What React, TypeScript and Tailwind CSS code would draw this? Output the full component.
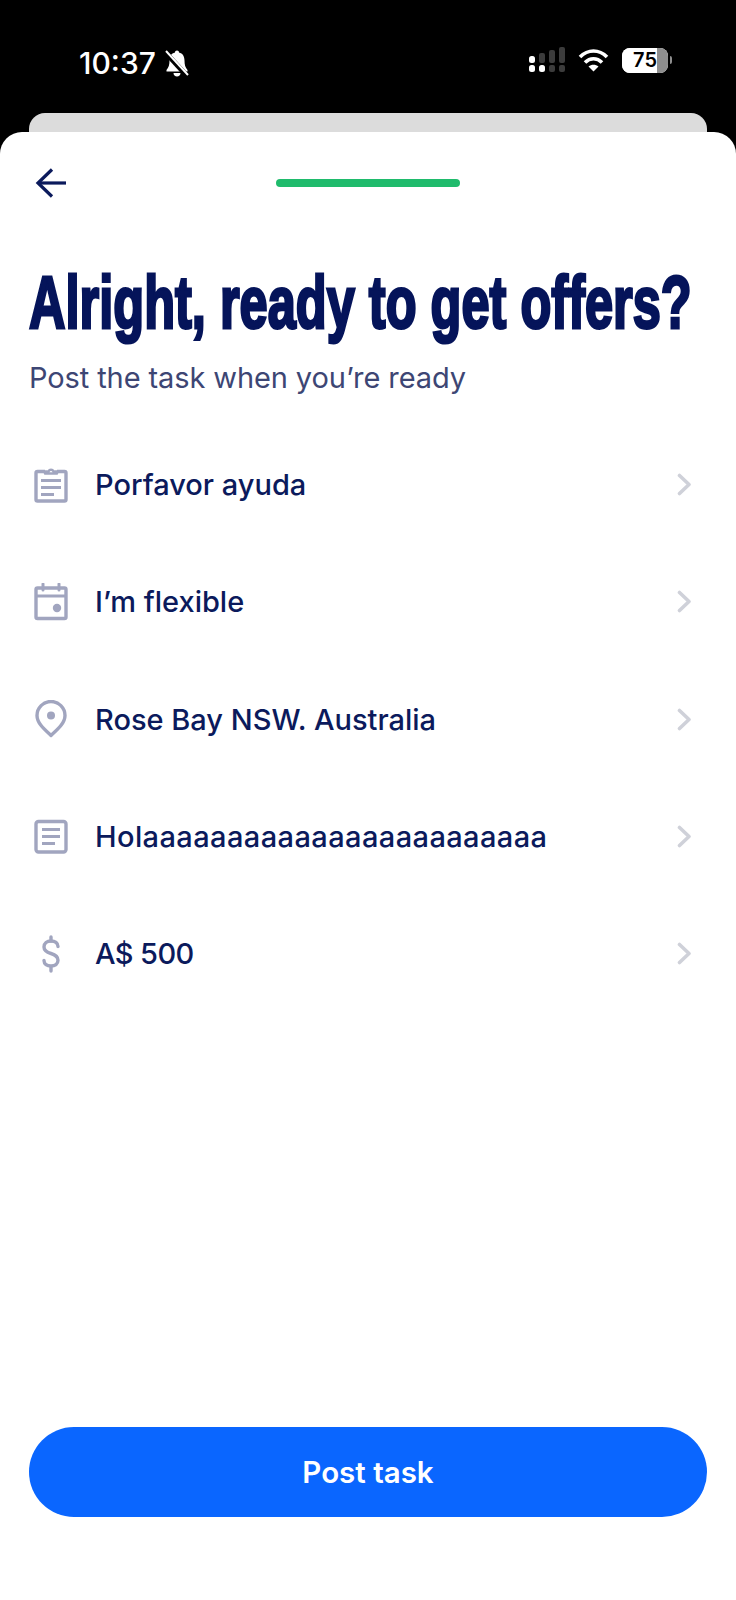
import type { ReactNode } from 'react';

const ICON_COLOR = '#a1a5bf';

function ClipboardIcon() {
  return (
    <svg width="36" height="38" viewBox="0 0 36 38" fill="none" stroke={ICON_COLOR} strokeWidth="3.4" strokeLinejoin="round">
      <path d="M12 5.500H4.500a1.500 1.500 0 0 0-1.500 1.500v26.500a1.500 1.500 0 0 0 1.500 1.500h27a1.500 1.500 0 0 0 1.500-1.500V7a1.500 1.500 0 0 0-1.500-1.500H24" />
      <path d="M12 7.500V5.500h3.500a2.700 2.700 0 0 1 5 0H24v2z" strokeWidth="2.4" />
      <path d="M8 14.500h20M8 21.500h20M8 28.500h13" strokeWidth="3" />
    </svg>
  );
}

function CalendarIcon() {
  return (
    <svg width="36" height="38" viewBox="0 0 36 38" fill="none" stroke={ICON_COLOR} strokeWidth="3.4" strokeLinejoin="round">
      <rect x="3" y="5" width="30" height="30.500" rx="1.500" />
      <path d="M3 13h30" strokeWidth="3" />
      <path d="M10 1v6M26 1v6" strokeWidth="3" strokeLinecap="round" />
      <circle cx="24" cy="25" r="4.200" fill={ICON_COLOR} stroke="none" />
    </svg>
  );
}

function PinIcon() {
  return (
    <svg width="36" height="38" viewBox="0 0 36 38" fill="none">
      <path d="M18 35.500C11 29 4 23 4 15.500a14 14 0 0 1 28 0C32 23 25 29 18 35.500z" stroke={ICON_COLOR} strokeWidth="3.4" strokeLinejoin="round" />
      <circle cx="18" cy="15.500" r="4" fill={ICON_COLOR} />
    </svg>
  );
}

function NoteIcon() {
  return (
    <svg width="36" height="38" viewBox="0 0 36 38" fill="none" stroke={ICON_COLOR} strokeWidth="3.4" strokeLinejoin="round">
      <rect x="3" y="3.500" width="30" height="30.500" rx="2.500" />
      <path d="M9 11.500h18M9 18.500h18M9 25.500h13" strokeWidth="3" />
    </svg>
  );
}

function DollarIcon() {
  return (
    <svg width="36" height="38" viewBox="0 0 36 38" fill="none" stroke={ICON_COLOR} strokeWidth="3.4" strokeLinecap="round">
      <path d="M18 2v4M18 32v4" />
      <path d="M25 11.500c0-3.500-3-5.500-7-5.500s-7 2.200-7 6c0 3.800 3 5.300 7 6.500s7 2.800 7 6.800c0 3.700-3 5.700-7 5.700s-7-2-7-5.500" />
    </svg>
  );
}

function StatusIcons() {
  return (
    <div className="mt-[2px] flex items-center gap-[13px]">
      <svg width="36" height="26" viewBox="0 0 36 26">
        <rect x="0" y="9" width="6" height="7" rx="2.500" fill="#fff" />
        <rect x="0" y="18" width="6" height="7" rx="2.500" fill="#fff" />
        <rect x="10" y="6" width="6" height="10" rx="2" fill="#3c3c3c" />
        <rect x="10" y="18" width="6" height="7" rx="2.500" fill="#fff" />
        <rect x="20" y="3" width="6" height="13" rx="2" fill="#3c3c3c" />
        <rect x="20" y="18" width="6" height="7" rx="2" fill="#3c3c3c" />
        <rect x="30" y="0" width="6" height="16" rx="2" fill="#3c3c3c" />
        <rect x="30" y="18" width="6" height="7" rx="2" fill="#3c3c3c" />
      </svg>
      <svg width="31" height="24" viewBox="0 0 31 24" fill="none" stroke="#fff" strokeWidth="3.6">
        <path d="M2 9c8-8 19-8 27 0" />
        <path d="M7 14.500c5-5 12-5 17 0" />
        <path d="M15.500 23.500l-5-5c3-2.500 7-2.500 10 0z" fill="#fff" stroke="none" />
      </svg>
      <div className="flex items-center gap-[2px]">
        <div className="flex h-[25px] w-[46px] overflow-hidden rounded-[8px] bg-white">
          <div className="flex w-[35px] items-center justify-end bg-white text-[20px] leading-none font-semibold text-black">75</div>
          <div className="flex-1 bg-[#8e8e8e]" />
        </div>
        <div className="h-[8px] w-[2px] rounded-r-full bg-[#8e8e8e]" />
      </div>
    </div>
  );
}

function TaskRow({ icon, label, labelClass = '' }: { icon: ReactNode; label: string; labelClass?: string }) {
  return (
    <div className="flex h-[117.3px] items-center">
      <div className="flex w-[66px] shrink-0 items-center pl-[4px]">{icon}</div>
      <span className={`flex-1 text-[29px] leading-none font-[450] text-[#0b1a5c] ${labelClass}`}>{label}</span>
      <svg className="mr-[15px]" width="15" height="23" viewBox="0 0 15 23" fill="none" stroke="#cfd1d9" strokeWidth="3.6" strokeLinecap="round" strokeLinejoin="round">
        <path d="M2.500 2.500l9.500 9-9.500 9" />
      </svg>
    </div>
  );
}

export default function App() {
  return (
    <div className="flex h-[1600px] w-full flex-col overflow-hidden bg-black font-['Inter',sans-serif]">
      <div className="flex h-[113px] shrink-0 items-start justify-between pt-[45px] pr-[64px] pl-[79px]">
        <div className="flex items-center gap-[8px]">
          <span className="text-[30px] leading-[36px] font-medium text-white">10:37</span>
          <svg width="26" height="28" viewBox="0 0 26 28" fill="#fff" stroke="none">
            <path d="M13 1.500c-1.300 0-2 .8-2 2-3.800.9-5.500 4-5.500 8 0 4.500-.8 7-3 9.500v1.500h21V21c-2.200-2.500-3-5-3-9.500 0-4-1.700-7.100-5.500-8 0-1.200-.7-2-2-2z" />
            <path d="M9.500 24h7c0 2-1.500 3.500-3.500 3.500S9.500 26 9.500 24z" />
            <path d="M1 3l22 24" stroke="#000" strokeWidth="5" />
            <path d="M2 2l22 24" stroke="#fff" strokeWidth="2" />
          </svg>
        </div>
        <StatusIcons />
      </div>

      <div className="mx-[29px] h-[19px] shrink-0 rounded-t-[16px] bg-[#dcdcdc]" />

      <div className="flex flex-1 flex-col rounded-t-[22px] bg-white px-[29px]">
        <div className="relative mt-[34px] flex h-[34px] items-center justify-center">
          <svg className="absolute left-[6px]" width="32" height="30" viewBox="0 0 32 30" fill="none" stroke="#0b1a5c" strokeWidth="3.2">
            <path d="M17 1.500L3 15l14 13.500" />
            <path d="M3 15h28" />
          </svg>
          <div className="h-[8px] w-[184px] rounded-full bg-[#1fbb6c]" />
        </div>

        <h1 className="mt-[63px] origin-left scale-x-[0.683] font-['Liberation_Sans',sans-serif] text-[74px] leading-[80px] font-bold whitespace-nowrap text-[#05145a] [-webkit-text-stroke:3px_#05145a]">
          Alright, ready to get offers?
        </h1>
        <p className="mt-[15px] text-[29px] leading-[40px] tracking-[-0.1px] text-[#3d4674]">Post the task when you’re ready</p>

        <div className="mt-[28px] flex flex-col">
          <TaskRow icon={<ClipboardIcon />} label="Porfavor ayuda" />
          <TaskRow icon={<CalendarIcon />} label="I’m flexible" />
          <TaskRow icon={<PinIcon />} label="Rose Bay NSW. Australia" />
          <TaskRow icon={<NoteIcon />} label="Holaaaaaaaaaaaaaaaaaaaaaaaa" labelClass="tracking-[0.4px]" />
          <TaskRow icon={<DollarIcon />} label="A$ 500" labelClass="tracking-[-0.6px]" />
        </div>

        <div className="mt-auto mb-[83px] flex h-[90px] items-center justify-center rounded-[45px] bg-[#0a66ff]">
          <span className="text-[29.500px] font-semibold text-white">Post task</span>
        </div>
      </div>
    </div>
  );
}
